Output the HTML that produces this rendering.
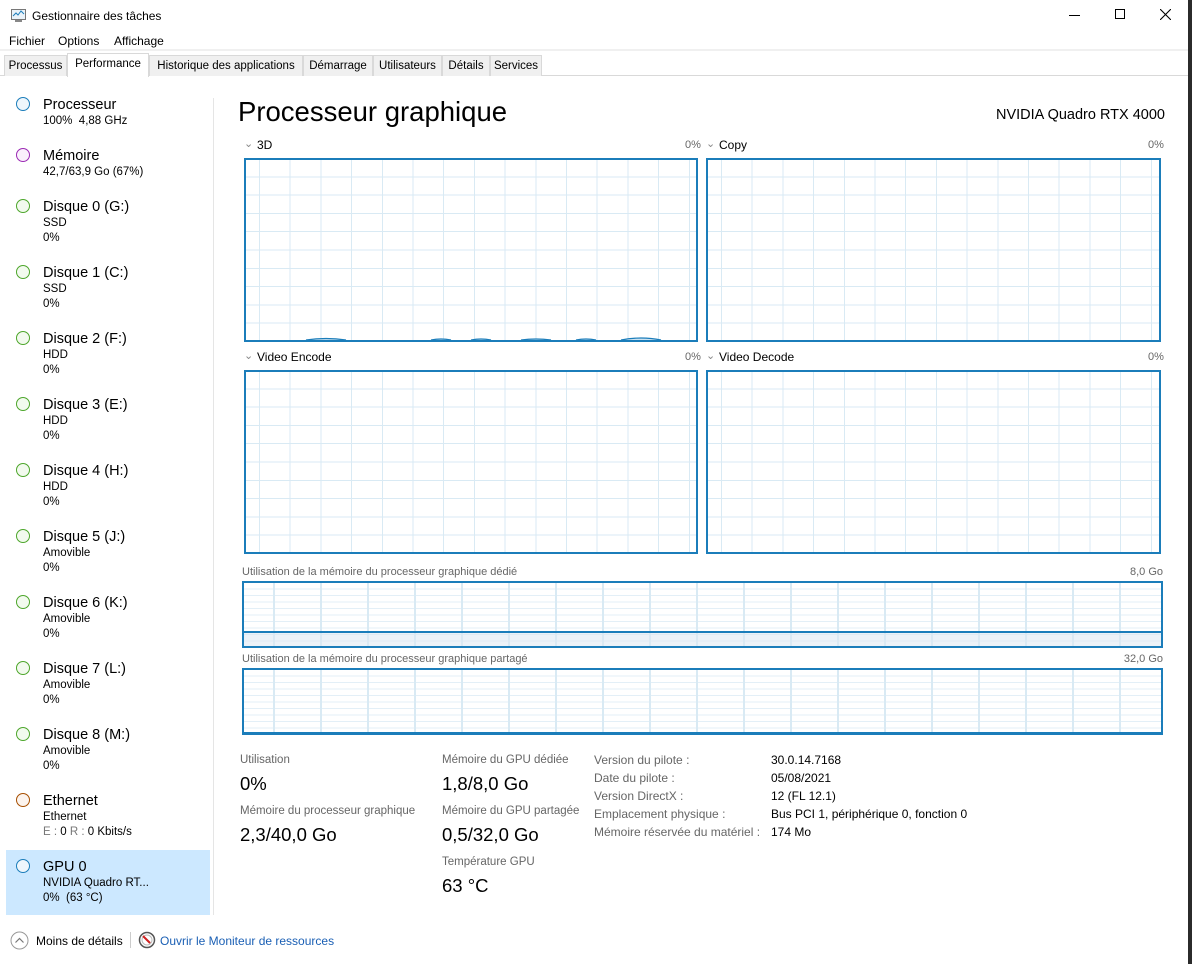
<!DOCTYPE html>
<html><head><meta charset="utf-8"><style>
*{margin:0;padding:0;box-sizing:border-box}
body{width:1192px;height:964px;background:#fff;position:relative;overflow:hidden;font-family:"Liberation Sans",sans-serif;color:#000}
.a{position:absolute;white-space:nowrap;line-height:1}
.g{position:absolute;border:2px solid #1b7dba;background-color:#fff;
background-image:repeating-linear-gradient(90deg,transparent 0 13px,#d9eaf4 13px 14px,transparent 14px 30.7px),repeating-linear-gradient(180deg,transparent 0 16.3px,#d9eaf4 16.3px 17.3px,transparent 17.3px 18.3px)}
.m{position:absolute;border:2px solid #1b7dba;background-color:#fff;
background-image:repeating-linear-gradient(90deg,transparent 0 29px,#d9eaf4 29px 31px,transparent 31px 47px),repeating-linear-gradient(180deg,transparent 0 5.5px,#e3eff7 5.5px 6.5px)}
.c{position:absolute;width:14px;height:14px;border-radius:50%;border:1.3px solid;left:16px}
.n{position:absolute;left:43px;font-size:14.5px;line-height:1;white-space:nowrap}
.s{position:absolute;left:43px;font-size:11.5px;line-height:1;white-space:nowrap}
.tab{position:absolute;top:55px;height:21px;border:1px solid #d9d9d9;border-bottom:none;background:#f0f0f0;font-size:11.5px;padding-top:4px;text-align:center}
.lbl{font-size:11.5px;color:#333}
.gl{font-size:11px;color:#666}
.sv{font-size:12px;color:#666}
.big{font-size:18.5px}
</style></head><body>
<div class="a" style="right:0;top:0;width:4px;height:964px;background:#2b2b2b"></div>
<svg class="a" style="left:10px;top:8px" width="17" height="15" viewBox="0 0 17 15"><rect x="1.5" y="1.5" width="14" height="10" fill="#eaf3fa" stroke="#777"/><polyline points="3,8 6,5 8,7 11,3 14,6" fill="none" stroke="#1b7dba"/><rect x="5" y="12" width="7" height="2" fill="#888"/></svg>
<div class="a" style="left:32px;top:10px;font-size:12px">Gestionnaire des tâches</div>
<div class="a" style="left:1069px;top:15px;width:11px;height:1px;background:#000"></div>
<div class="a" style="left:1115px;top:9px;width:10px;height:10px;border:1px solid #000"></div>
<svg class="a" style="left:1160px;top:9px" width="11" height="11"><path d="M0 0L11 11M11 0L0 11" stroke="#000" stroke-width="1.1"/></svg>
<div class="a" style="left:9px;top:35px;font-size:12px">Fichier</div>
<div class="a" style="left:58px;top:35px;font-size:12px">Options</div>
<div class="a" style="left:114px;top:35px;font-size:12px">Affichage</div>
<div class="a" style="left:0;top:49px;width:1188px;height:2px;background:#f0f0f0"></div>
<div class="a" style="left:0;top:51px;width:1188px;height:25px;background:#fff"></div>
<div class="a" style="left:0;top:75px;width:1188px;height:1px;background:#d9d9d9"></div>
<div class="tab" style="left:4px;width:63px">Processus</div>
<div class="tab" style="left:149px;width:154px">Historique des applications</div>
<div class="tab" style="left:303px;width:70px">Démarrage</div>
<div class="tab" style="left:373px;width:69px">Utilisateurs</div>
<div class="tab" style="left:442px;width:48px">Détails</div>
<div class="tab" style="left:490px;width:52px">Services</div>
<div class="tab" style="left:67px;width:82px;top:53px;height:24px;background:#fff;padding-top:4px">Performance</div>
<div class="a" style="left:213px;top:98px;width:1px;height:817px;background:#e5e5e5"></div>
<div class="a" style="left:6px;top:850px;width:204px;height:65px;background:#cce8ff"></div>

<div class="c" style="top:97px;border-color:#1b7dba;background:#eef6fc"></div>
<div class="n" style="top:98px">Processeur</div><div class="s" style="top:116px">100%&nbsp; 4,88 GHz</div>
<div class="c" style="top:148px;border-color:#9b2ab4;background:#faf0fc"></div>
<div class="n" style="top:149px">Mémoire</div><div class="s" style="top:167px">42,7/63,9 Go (67%)</div>

<div class="c" style="top:199px;border-color:#4da62b;background:#f2faee"></div>
<div class="n" style="top:200px">Disque 0 (G:)</div><div class="s" style="top:218px">SSD</div><div class="s" style="top:233px">0%</div>
<div class="c" style="top:265px;border-color:#4da62b;background:#f2faee"></div>
<div class="n" style="top:266px">Disque 1 (C:)</div><div class="s" style="top:284px">SSD</div><div class="s" style="top:299px">0%</div>
<div class="c" style="top:331px;border-color:#4da62b;background:#f2faee"></div>
<div class="n" style="top:332px">Disque 2 (F:)</div><div class="s" style="top:350px">HDD</div><div class="s" style="top:365px">0%</div>
<div class="c" style="top:397px;border-color:#4da62b;background:#f2faee"></div>
<div class="n" style="top:398px">Disque 3 (E:)</div><div class="s" style="top:416px">HDD</div><div class="s" style="top:431px">0%</div>
<div class="c" style="top:463px;border-color:#4da62b;background:#f2faee"></div>
<div class="n" style="top:464px">Disque 4 (H:)</div><div class="s" style="top:482px">HDD</div><div class="s" style="top:497px">0%</div>
<div class="c" style="top:529px;border-color:#4da62b;background:#f2faee"></div>
<div class="n" style="top:530px">Disque 5 (J:)</div><div class="s" style="top:548px">Amovible</div><div class="s" style="top:563px">0%</div>
<div class="c" style="top:595px;border-color:#4da62b;background:#f2faee"></div>
<div class="n" style="top:596px">Disque 6 (K:)</div><div class="s" style="top:614px">Amovible</div><div class="s" style="top:629px">0%</div>
<div class="c" style="top:661px;border-color:#4da62b;background:#f2faee"></div>
<div class="n" style="top:662px">Disque 7 (L:)</div><div class="s" style="top:680px">Amovible</div><div class="s" style="top:695px">0%</div>
<div class="c" style="top:727px;border-color:#4da62b;background:#f2faee"></div>
<div class="n" style="top:728px">Disque 8 (M:)</div><div class="s" style="top:746px">Amovible</div><div class="s" style="top:761px">0%</div>
<div class="c" style="top:793px;border-color:#a74f01;background:#fcf4ee"></div>
<div class="n" style="top:794px">Ethernet</div><div class="s" style="top:812px">Ethernet</div><div class="s" style="top:827px"><span style="color:#777">E :</span> 0 <span style="color:#777">R :</span> 0 Kbits/s</div>
<div class="c" style="top:859px;border-color:#1b7dba;background:#eef6fc"></div>
<div class="n" style="top:860px">GPU 0</div><div class="s" style="top:878px">NVIDIA Quadro RT...</div><div class="s" style="top:893px">0%&nbsp; (63 °C)</div>

<div class="a" style="left:238px;top:98px;font-size:27.5px">Processeur graphique</div>
<div class="a" style="right:27px;top:108px;font-size:14.5px">NVIDIA Quadro RTX 4000</div>

<div class="a gl" style="left:244px;top:139px;color:#888">⌄</div>
<div class="a" style="left:257px;top:139px;font-size:12px">3D</div>
<div class="a gl" style="left:685px;top:140px">0%</div>
<div class="a gl" style="left:706px;top:139px;color:#888">⌄</div>
<div class="a" style="left:719px;top:139px;font-size:12px">Copy</div>
<div class="a gl" style="left:1148px;top:140px">0%</div>
<div class="g" style="left:244px;top:158px;width:454px;height:184px"></div>
<svg class="a" style="left:246px;top:334px" width="450" height="7"><path d="M60 6Q80 3 100 6 M185 6Q195 4 205 6 M225 6Q235 4 245 6 M275 6Q290 4 305 6 M330 6Q340 4 350 6 M375 6Q395 2 415 6" stroke="#1b7dba" stroke-width="1.2" fill="#cfe4f2"/></svg>
<div class="g" style="left:706px;top:158px;width:455px;height:184px"></div>

<div class="a gl" style="left:244px;top:351px;color:#888">⌄</div>
<div class="a" style="left:257px;top:351px;font-size:12px">Video Encode</div>
<div class="a gl" style="left:685px;top:352px">0%</div>
<div class="a gl" style="left:706px;top:351px;color:#888">⌄</div>
<div class="a" style="left:719px;top:351px;font-size:12px">Video Decode</div>
<div class="a gl" style="left:1148px;top:352px">0%</div>
<div class="g" style="left:244px;top:370px;width:454px;height:184px"></div>
<div class="g" style="left:706px;top:370px;width:455px;height:184px"></div>

<div class="a gl" style="left:242px;top:567px">Utilisation de la mémoire du processeur graphique dédié</div>
<div class="a gl" style="right:29px;top:567px">8,0 Go</div>
<div class="m" style="left:242px;top:581px;width:921px;height:67px"></div>
<div class="a" style="left:244px;top:631px;width:917px;height:15px;background:rgba(220,232,242,.55);border-top:2px solid #1b7dba"></div>
<div class="a gl" style="left:242px;top:654px">Utilisation de la mémoire du processeur graphique partagé</div>
<div class="a gl" style="right:29px;top:654px">32,0 Go</div>
<div class="m" style="left:242px;top:668px;width:921px;height:67px;border-bottom-width:3px"></div>

<div class="a lbl" style="left:240px;top:755px;color:#666">Utilisation</div>
<div class="a big" style="left:240px;top:775px">0%</div>
<div class="a lbl" style="left:240px;top:806px;color:#666">Mémoire du processeur graphique</div>
<div class="a big" style="left:240px;top:826px">2,3/40,0 Go</div>
<div class="a lbl" style="left:442px;top:755px;color:#666">Mémoire du GPU dédiée</div>
<div class="a big" style="left:442px;top:775px">1,8/8,0 Go</div>
<div class="a lbl" style="left:442px;top:806px;color:#666">Mémoire du GPU partagée</div>
<div class="a big" style="left:442px;top:826px">0,5/32,0 Go</div>
<div class="a lbl" style="left:442px;top:857px;color:#666">Température GPU</div>
<div class="a big" style="left:442px;top:877px">63 °C</div>

<div class="a sv" style="left:594px;top:754px">Version du pilote :</div>
<div class="a sv" style="left:594px;top:772px">Date du pilote :</div>
<div class="a sv" style="left:594px;top:790px">Version DirectX :</div>
<div class="a sv" style="left:594px;top:808px">Emplacement physique :</div>
<div class="a sv" style="left:594px;top:826px">Mémoire réservée du matériel :</div>
<div class="a" style="left:771px;top:754px;font-size:12px">30.0.14.7168</div>
<div class="a" style="left:771px;top:772px;font-size:12px">05/08/2021</div>
<div class="a" style="left:771px;top:790px;font-size:12px">12 (FL 12.1)</div>
<div class="a" style="left:771px;top:808px;font-size:12px">Bus PCI 1, périphérique 0, fonction 0</div>
<div class="a" style="left:771px;top:826px;font-size:12px">174 Mo</div>

<svg class="a" style="left:10px;top:931px" width="19" height="19"><circle cx="9.5" cy="9.5" r="8.5" fill="#fff" stroke="#999"/><path d="M5.5 11.5L9.5 7.5L13.5 11.5" fill="none" stroke="#777" stroke-width="1.2"/></svg>
<div class="a" style="left:36px;top:935px;font-size:12px">Moins de détails</div>
<div class="a" style="left:130px;top:932px;width:1px;height:16px;background:#ccc"></div>
<svg class="a" style="left:138px;top:931px" width="18" height="18"><circle cx="9" cy="9" r="7.5" fill="#fff" stroke="#555" stroke-width="1.5"/><circle cx="9" cy="9" r="5" fill="none" stroke="#bbb"/><path d="M5 5L12 12" stroke="#d02020" stroke-width="2"/></svg>
<div class="a" style="left:160px;top:935px;font-size:12px;color:#1a5fb4">Ouvrir le Moniteur de ressources</div>
</body></html>
